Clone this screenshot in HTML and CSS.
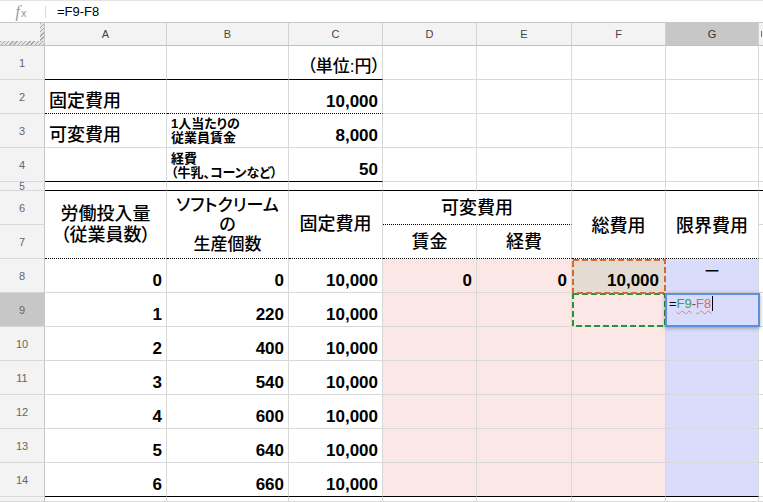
FILE: index.html
```html
<!DOCTYPE html>
<html lang="ja">
<head>
<meta charset="utf-8">
<title>Sheet</title>
<link rel="stylesheet" href="styles.css">
</head>
<body>
<div class="fbar">
  <div class="fx"><i>f</i><span>x</span></div>
  <div class="sep"></div>
  <div class="ftext">=F9-F8</div>
</div>
<div class="sheet">
  <!-- header row -->
  <div class="corner"></div>
  <div class="ch">A</div>
  <div class="ch">B</div>
  <div class="ch">C</div>
  <div class="ch">D</div>
  <div class="ch">E</div>
  <div class="ch">F</div>
  <div class="ch sel">G</div>
  <div class="ch h"><span class="hmark"></span></div>

  <!-- row 1 -->
  <div class="rh">1</div>
  <div class="c bs"></div>
  <div class="c bs"></div>
  <div class="c bs r jp unit">（単位:円）</div>
  <div class="c"></div><div class="c"></div><div class="c"></div><div class="c"></div><div class="c h"></div>

  <!-- row 2 -->
  <div class="rh">2</div>
  <div class="c bd jp lg label">固定費用</div>
  <div class="c bd"></div>
  <div class="c bd r num">10,000</div>
  <div class="c"></div><div class="c"></div><div class="c"></div><div class="c"></div><div class="c h"></div>

  <!-- row 3 -->
  <div class="rh">3</div>
  <div class="c jp lg label">可変費用</div>
  <div class="c jp sm"><div>1人当たりの<br>従業員賃金</div></div>
  <div class="c r num">8,000</div>
  <div class="c"></div><div class="c"></div><div class="c"></div><div class="c"></div><div class="c h"></div>

  <!-- row 4 -->
  <div class="rh">4</div>
  <div class="c bs"></div>
  <div class="c bs jp sm tight"><div>経費<br>（牛乳、コーンなど）</div></div>
  <div class="c bs r num">50</div>
  <div class="c"></div><div class="c"></div><div class="c"></div><div class="c"></div><div class="c h"></div>

  <!-- row 5 -->
  <div class="rh small">5</div>
  <div class="c bs"></div><div class="c bs"></div><div class="c bs"></div><div class="c bs"></div>
  <div class="c bs"></div><div class="c bs"></div><div class="c bs"></div><div class="c bs h"></div>

  <!-- row 6 -->
  <div class="rh">6</div>
  <div class="c bd jp lg mid span2r"><div>労働投入量<br>（従業員数）</div></div>
  <div class="c bd jp mid three span2r"><div>ソフトクリーム<br>の<br>生産個数</div></div>
  <div class="c bd jp lg mid span2r">固定費用</div>
  <div class="c bd jp lg ctr head6 span2c">可変費用</div>
  <div class="c bd jp lg mid low span2r">総費用</div>
  <div class="c bd jp lg mid low span2r">限界費用</div>
  <div class="c h"></div>

  <!-- row 7 -->
  <div class="rh">7</div>
  <div class="c bd jp lg ctr head7">賃金</div>
  <div class="c bd jp lg ctr head7">経費</div>
  <div class="c h"></div>

  <!-- row 8 -->
  <div class="rh">8</div>
  <div class="c r num">0</div>
  <div class="c r num">0</div>
  <div class="c r num">10,000</div>
  <div class="c r num pink">0</div>
  <div class="c r num pink">0</div>
  <div class="c r num tan ov f8">10,000<svg class="mark orange" width="94" height="35" viewBox="0 0 94 35"><rect x="1" y="1" width="92" height="33" fill="none" stroke="#d6692e" stroke-width="2" stroke-dasharray="6 3"/></svg></div>
  <div class="c lav dash">ー</div>
  <div class="c h"></div>

  <!-- row 9 -->
  <div class="rh sel">9</div>
  <div class="c r num">1</div>
  <div class="c r num">220</div>
  <div class="c r num">10,000</div>
  <div class="c pink"></div>
  <div class="c pink"></div>
  <div class="c pink ov"><svg class="mark green" width="94" height="34" viewBox="0 0 94 34"><rect x="1" y="1" width="92" height="32" fill="none" stroke="#2f8f3a" stroke-width="2" stroke-dasharray="6 3"/></svg></div>
  <div class="c lav ov">
    <div class="editor"><span>=</span><span class="refg">F9</span><span class="minus">-</span><span class="refo">F8</span><span class="caret"></span></div>
  </div>
  <div class="c h"></div>

  <!-- row 10 -->
  <div class="rh">10</div>
  <div class="c r num">2</div>
  <div class="c r num">400</div>
  <div class="c r num">10,000</div>
  <div class="c pink"></div><div class="c pink"></div><div class="c pink"></div><div class="c lav"></div><div class="c h"></div>

  <!-- row 11 -->
  <div class="rh">11</div>
  <div class="c r num">3</div>
  <div class="c r num">540</div>
  <div class="c r num">10,000</div>
  <div class="c pink"></div><div class="c pink"></div><div class="c pink"></div><div class="c lav"></div><div class="c h"></div>

  <!-- row 12 -->
  <div class="rh">12</div>
  <div class="c r num">4</div>
  <div class="c r num">600</div>
  <div class="c r num">10,000</div>
  <div class="c pink"></div><div class="c pink"></div><div class="c pink"></div><div class="c lav"></div><div class="c h"></div>

  <!-- row 13 -->
  <div class="rh">13</div>
  <div class="c r num">5</div>
  <div class="c r num">640</div>
  <div class="c r num">10,000</div>
  <div class="c pink"></div><div class="c pink"></div><div class="c pink"></div><div class="c lav"></div><div class="c h"></div>

  <!-- row 14 -->
  <div class="rh">14</div>
  <div class="c bs r num">6</div>
  <div class="c bs r num">660</div>
  <div class="c bs r num">10,000</div>
  <div class="c bs pink"></div><div class="c bs pink"></div><div class="c bs pink"></div><div class="c bs lav"></div><div class="c h"></div>

  <!-- row 15 (only its top edge is visible) -->
  <div class="rh"></div>
  <div class="c"></div><div class="c"></div><div class="c"></div><div class="c"></div>
  <div class="c"></div><div class="c"></div><div class="c"></div><div class="c h"></div>
</div>
</body>
</html>
```
FILE: styles.css
```css
html, body {
  margin: 0;
  padding: 0;
  background: #fff;
}
body {
  width: 763px;
  height: 502px;
  overflow: hidden;
  font-family: "Liberation Sans", Arial, sans-serif;
  color: #000;
}

/* formula bar */
.fbar {
  height: 23px;
  box-sizing: border-box;
  border-top: 1px solid #e4e4e4;
  border-bottom: 1px solid #c9c9c9;
  display: flex;
  align-items: center;
}
.fx {
  width: 45px;
  display: flex;
  justify-content: center;
  align-items: baseline;
  color: #9a9a9a;
  font-family: "Liberation Serif", serif;
  padding-right: 3px;
  box-sizing: border-box;
}
.fx i {
  font-size: 16px;
  font-style: italic;
}
.fx span {
  font-family: "Liberation Sans", sans-serif;
  font-size: 11px;
  margin-left: 1px;
}
.sep {
  width: 1px;
  height: 12px;
  background: #d9d9d9;
}
.ftext {
  padding-left: 11px;
  font-size: 13px;
}

/* grid */
.sheet {
  display: grid;
  grid-template-columns: 45px 122px 122px 94px 94px 95px 94px 93px 4px;
  grid-template-rows: 23px repeat(4, 34px) 9px repeat(9, 34px) 5px;
}
.sheet > div {
  box-sizing: border-box;
  min-width: 0;
  min-height: 0;
}

.corner {
  position: relative;
  background: #f3f3f3;
  border-right: 1px solid #c6c6c6;
  border-bottom: 1px solid #c0c0c0;
}
.corner::before {
  content: "";
  position: absolute;
  right: 0;
  top: 0;
  width: 4px;
  height: 100%;
  background: repeating-linear-gradient(135deg, #a9a9a9 0 1px, #e4e4e4 1px 3px);
}
.corner::after {
  content: "";
  position: absolute;
  left: 0;
  bottom: 0;
  width: 100%;
  height: 4px;
  background: repeating-linear-gradient(135deg, #a9a9a9 0 1px, #e4e4e4 1px 3px);
}

.ch {
  background: #f3f3f3;
  border-right: 1px solid #d2d2d2;
  border-bottom: 1px solid #c0c0c0;
  display: flex;
  align-items: center;
  justify-content: center;
  font-size: 11px;
  color: #444;
  overflow: hidden;
}
.ch.h {
  border-right: none;
  justify-content: flex-start;
}
.hmark {
  width: 1px;
  height: 6px;
  margin-left: 2px;
  background: #777;
}

.rh {
  background: #f3f3f3;
  border-right: 1px solid #c6c6c6;
  border-bottom: 1px solid #d8d8d8;
  display: flex;
  align-items: center;
  justify-content: center;
  font-size: 11px;
  color: #666;
  overflow: hidden;
}
.rh.small {
  font-size: 10px;
  line-height: 9px;
  align-items: flex-start;
}
.sel {
  background: #c7c7c7;
}
.ch.sel {
  color: #333;
}

/* cells */
.c {
  border-right: 1px solid #d9d9d9;
  border-bottom: 1px solid #d9d9d9;
  display: flex;
  align-items: flex-end;
  justify-content: flex-start;
  padding: 0 4px 2px 4px;
  white-space: nowrap;
  overflow: hidden;
}
.c.h {
  border-right: none;
}
.ov {
  position: relative;
  overflow: visible;
}
.r {
  justify-content: flex-end;
}
.ctr {
  justify-content: center;
}
.mid {
  justify-content: center;
  align-items: center;
  text-align: center;
  padding: 0 2px;
}
.low {
  padding-top: 4px;
}
.bs {
  border-bottom: 1px solid #000;
}
.bd {
  border-bottom: 1px dotted #000;
}
.span2r {
  grid-row: span 2;
}
.span2c {
  grid-column: span 2;
}

.jp {
  font-family: "Liberation Sans", "Noto Sans CJK JP", sans-serif;
  font-feature-settings: "palt";
  font-weight: 500;
}
.lg {
  font-size: 18px;
  line-height: 20.5px;
}
.unit {
  font-size: 17px;
  line-height: 20px;
  padding-right: 2px;
  padding-bottom: 2px;
}
.label {
  padding-left: 4px;
  padding-bottom: 2px;
}
.sm {
  font-size: 13px;
  line-height: 14.6px;
  font-weight: 700;
  padding-bottom: 1px;
}
.sm.tight {
  padding-bottom: 0;
}
.three {
  font-size: 17px;
  line-height: 19.4px;
  padding-top: 1px;
}
.head6 {
  padding-bottom: 6px;
}
.head7 {
  padding-bottom: 6px;
}

.num {
  font-family: "Liberation Sans", Arial, sans-serif;
  font-weight: 700;
  font-size: 17px;
  line-height: 19px;
}

.pink {
  background: #fce7e7;
}
.lav {
  background: #d9dcfa;
}
.tan {
  background: #e4dcd2;
}
.f8 {
  padding-right: 6px;
}

.dash {
  font-family: "Noto Sans CJK JP", sans-serif;
  justify-content: center;
  align-items: flex-start;
  padding-top: 0;
  font-size: 16px;
  line-height: 22px;
}

.mark {
  position: absolute;
  left: 0;
  top: 0;
  display: block;
}
.orange {
  z-index: 3;
}
.green {
  z-index: 2;
}

.editor {
  position: absolute;
  left: -1px;
  top: 0;
  width: 95px;
  height: 34px;
  box-sizing: border-box;
  border: 2px solid #5f8fe2;
  box-shadow: 0 1px 4px rgba(0, 0, 0, 0.35);
  background: #d9dcfa;
  padding: 1px 0 0 2px;
  display: flex;
  align-items: flex-start;
  font-size: 13px;
  line-height: 15px;
  color: #000;
  z-index: 4;
}
.refg {
  color: #3f9a5a;
  text-decoration: underline wavy #e57a7a;
  text-decoration-thickness: 1px;
  text-underline-offset: 2px;
}
.refo {
  color: #de6a4e;
  text-decoration: underline wavy #e57a7a;
  text-decoration-thickness: 1px;
  text-underline-offset: 2px;
}
.minus {
  color: #555;
}
.caret {
  width: 1px;
  height: 15px;
  background: #000;
  margin-left: 1px;
}
```
